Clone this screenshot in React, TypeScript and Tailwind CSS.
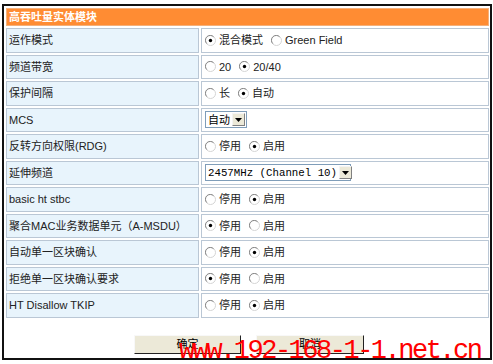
import React from "react";

function Radio({ checked }: { checked?: boolean }) {
  return (
    <svg width="11" height="11" viewBox="0 0 11 11" className="shrink-0">
      <circle cx="5.5" cy="5.5" r="5" fill="#ffffff" stroke="#d4d4d4" strokeWidth="1" />
      <path d="M1.8 8.6 A4.6 4.6 0 0 1 8.6 1.8" fill="none" stroke="#8a8a8a" strokeWidth="1" />
      {checked && <circle cx="5.5" cy="5.5" r="1.7" fill="#000000" />}
    </svg>
  );
}

function Opt({ checked, label }: { checked?: boolean; label: string }) {
  return (
    <span className="flex items-center gap-[3px] whitespace-nowrap">
      <Radio checked={checked} />
      <span>{label}</span>
    </span>
  );
}

function Arrow() {
  return (
    <span className="shrink-0 w-[13px] h-[13px] bg-[#ece9d8] border border-t-[#f4f4f4] border-l-[#f4f4f4] border-r-[#808080] border-b-[#808080] flex items-center justify-center">
      <svg width="7" height="4" viewBox="0 0 7 4">
        <path d="M0 0 H7 L3.5 4 Z" fill="#000" />
      </svg>
    </span>
  );
}

function Select({ text, w, mono }: { text: string; w: string; mono?: boolean }) {
  return (
    <span
      className={`flex items-center justify-between gap-[2px] h-[17px] ${w} bg-white border border-[#7f9db9] pl-[2px] pr-[1px] whitespace-nowrap`}
    >
      <span className={mono ? "font-['Liberation_Mono',monospace] text-[10.75px] text-black" : "text-black"}>{text}</span>
      <Arrow />
    </span>
  );
}

type Row = { label: string; value: React.ReactNode };

const rows: Row[] = [
  { label: "运作模式", value: (<><Opt checked label="混合模式" /><Opt label="Green Field" /></>) },
  { label: "频道带宽", value: (<><Opt label="20" /><Opt checked label="20/40" /></>) },
  { label: "保护间隔", value: (<><Opt label="长" /><Opt checked label="自动" /></>) },
  { label: "MCS", value: <Select text="自动" w="w-[42px]" /> },
  { label: "反转方向权限(RDG)", value: (<><Opt label="停用" /><Opt checked label="启用" /></>) },
  { label: "延伸频道", value: <Select text="2457MHz (Channel 10)" w="w-[146px]" mono /> },
  { label: "basic ht stbc", value: (<><Opt label="停用" /><Opt checked label="启用" /></>) },
  { label: "聚合MAC业务数据单元（A-MSDU）", value: (<><Opt checked label="停用" /><Opt label="启用" /></>) },
  { label: "自动单一区块确认", value: (<><Opt label="停用" /><Opt checked label="启用" /></>) },
  { label: "拒绝单一区块确认要求", value: (<><Opt checked label="停用" /><Opt label="启用" /></>) },
  { label: "HT Disallow TKIP", value: (<><Opt label="停用" /><Opt checked label="启用" /></>) },
];

export default function App() {
  return (
    <div className="relative w-[493px] h-[364px] bg-white overflow-hidden font-['Liberation_Sans','Noto_Sans_CJK_SC',sans-serif] text-[11px] text-[#222]">
      <div className="ml-[2px] mt-[4px] w-[490px] h-[356px] border-2 border-[#111] pt-[2px] pl-[2px] pr-[1px]">
        <div className="flex flex-col gap-[2px]">
          <div className="h-[18px] bg-[#ff8c33] border border-[#f5b07a] flex items-center pl-[2px] text-white font-bold">
            高吞吐量实体模块
          </div>
          {rows.map((r, i) => (
            <div key={i} className="grid grid-cols-[193px_1fr] gap-[2px] h-[24.5px]">
              <div className="bg-[#e8f4fc] border border-[#bac7d5] flex items-center pl-[2px] whitespace-nowrap">{r.label}</div>
              <div className="bg-white border border-[#bac7d5] flex items-center gap-[8px] pl-[3px] text-[#222]">
                {r.value}
              </div>
            </div>
          ))}
        </div>
        <div className="flex justify-center gap-[15px] mt-[17px] pl-[3px]">
          <button className="w-[107px] h-[19px] bg-[#ece9d8] border border-t-[#f8f8f8] border-l-[#f8f8f8] border-r-[#222] border-b-[#222] text-[11px] text-black leading-none">
            确定
          </button>
          <button className="w-[108px] h-[19px] bg-[#ece9d8] border border-t-[#f8f8f8] border-l-[#f8f8f8] border-r-[#222] border-b-[#222] text-[11px] text-black leading-none">
            取消
          </button>
        </div>
      </div>
      <div className="absolute left-[179px] top-[338px] font-['Liberation_Mono',monospace] text-[27px] leading-none tracking-[-2.5px] text-[#ff0000] whitespace-nowrap">
        www.192-168-1-1.net.cn
      </div>
    </div>
  );
}
